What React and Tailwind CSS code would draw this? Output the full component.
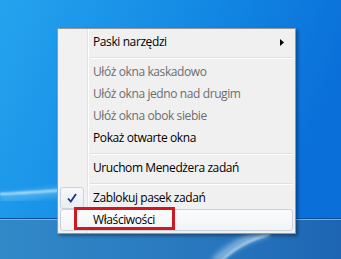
import React from "react";

const font = { fontFamily: '"Open Sans", "Noto Sans", Arial, sans-serif' };

function Item({ children, disabled, arrow }) {
  return (
    <div className={`relative h-[22px] flex items-center pl-[33px] pr-2 text-[12px] tracking-[-0.4px] ${disabled ? "text-[#6d6d6d]" : "text-black"}`}>
      <span>{children}</span>
      {arrow && (
        <svg className="absolute right-[8px] top-[8px]" width="5" height="7" viewBox="0 0 5 7">
          <path d="M0 0 L4 3.5 L0 7 Z" fill="#000" />
        </svg>
      )}
    </div>
  );
}

function Sep() {
  return (
    <div className="h-[8px] pt-[4px] pl-[30px]">
      <div className="h-px bg-[#e0e0e0]" />
      <div className="h-px bg-white" />
    </div>
  );
}

export default function App() {
  return (
    <div className="relative w-[341px] h-[259px] overflow-hidden flex flex-col" style={font}>
      <svg className="absolute inset-0" width="341" height="259" viewBox="0 0 341 259">
        <defs>
          <linearGradient id="sky" x1="0" y1="0" x2="1" y2="0.3">
            <stop offset="0" stopColor="#25a3ee" />
            <stop offset="0.55" stopColor="#1389e4" />
            <stop offset="1" stopColor="#0a6fd9" />
          </linearGradient>
          <linearGradient id="bar" x1="0" y1="0" x2="1" y2="0">
            <stop offset="0" stopColor="#3189c8" />
            <stop offset="0.6" stopColor="#2877be" />
            <stop offset="1" stopColor="#1d65b3" />
          </linearGradient>
          <filter id="blur" x="-20%" y="-20%" width="140%" height="140%">
            <feGaussianBlur stdDeviation="3" />
          </filter>
          <filter id="blur1" x="-20%" y="-50%" width="140%" height="200%">
            <feGaussianBlur stdDeviation="1" />
          </filter>
        </defs>
        <rect width="341" height="259" fill="url(#sky)" />
        <path d="M0 198 C30 196 60 190 120 186" stroke="#6cc4f4" strokeWidth="8" fill="none" filter="url(#blur)" opacity="0.6" />
        <path d="M0 194 C30 193 60 190 120 186" stroke="#d8f0ff" strokeWidth="1.8" fill="none" filter="url(#blur1)" />
        <rect y="218" width="341" height="41" fill="url(#bar)" />
        <rect y="218" width="341" height="1" fill="#0d4f96" />
        <rect y="219" width="341" height="1" fill="#8dbde6" opacity="0.8" />
        <path d="M214 262 C228 248 245 238 268 232" stroke="#b8d8f0" strokeWidth="6" fill="none" filter="url(#blur)" opacity="0.8" />
        <path d="M220 262 C232 250 248 240 270 234" stroke="#e6f3fc" strokeWidth="2" fill="none" filter="url(#blur1)" opacity="0.7" />
      </svg>

      <div className="absolute left-[57px] top-[28px] w-[239px] border border-[#979797] shadow-[2px_2px_3px_rgba(0,0,0,0.35)] px-[2px] py-[2px] bg-[linear-gradient(to_right,#f1f1f1_29px,#e2e3e3_29px,#e2e3e3_30px,#ffffff_30px,#ffffff_31px,#f0f0f0_31px)]">
        <Item arrow>Paski narzędzi</Item>
        <Sep />
        <Item disabled>Ułóż okna kaskadowo</Item>
        <Item disabled>Ułóż okna jedno nad drugim</Item>
        <Item disabled>Ułóż okna obok siebie</Item>
        <Item>Pokaż otwarte okna</Item>
        <Sep />
        <Item>Uruchom Menedżera zadań</Item>
        <Sep />
        <div className="relative h-[22px] flex items-center pl-[33px] text-[12px] tracking-[-0.4px] text-black">
          <div className="absolute left-0 top-0 w-[24px] h-[22px] rounded-[3px] border border-[#c9d3de] bg-[linear-gradient(#f6f8fa,#e9eef3)] flex items-center justify-center">
            <svg width="10" height="10" viewBox="0 0 10 10">
              <path d="M1 5.5 L3.8 8.5 L9 1" stroke="#1c2f8a" strokeWidth="1.8" fill="none" />
            </svg>
          </div>
          <span>Zablokuj pasek zadań</span>
        </div>
        <div className="h-[22px] flex items-center pl-[32px] text-[12px] tracking-[-0.4px] text-black rounded-[3px] border border-[#c7d2dd] bg-[linear-gradient(#fbfcfd,#f1f3f6)]">
          <span>Właściwości</span>
        </div>
      </div>

      <div className="absolute left-[74px] top-[207px] w-[101px] h-[23px] border-[3px] border-[#d3171e]" />
    </div>
  );
}
